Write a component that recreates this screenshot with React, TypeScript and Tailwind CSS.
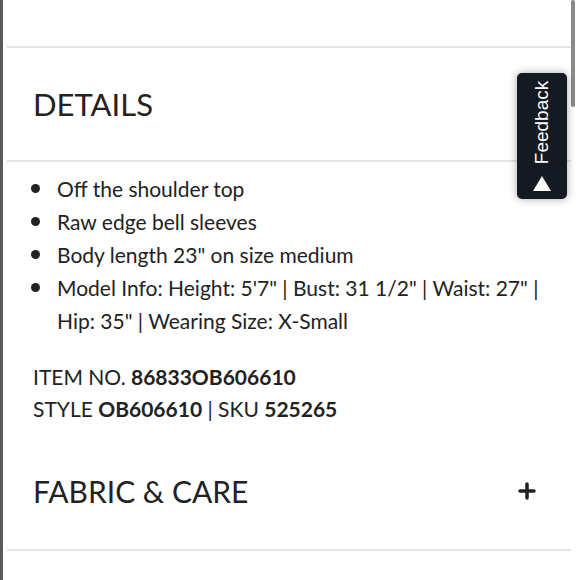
import { Plus, Minus } from 'lucide-react'

const details = [
  'Off the shoulder top',
  'Raw edge bell sleeves',
  'Body length 23" on size medium',
]

function Dot() {
  return (
    <span className="-ml-[3px] flex h-[33px] w-[27px] shrink-0 items-center pl-[1px]">
      <span className="h-[9px] w-[9px] rounded-full bg-[#222]" />
    </span>
  )
}

export default function App() {
  return (
    <div className="relative h-[580px] w-[580px] overflow-hidden bg-white text-[#222] font-['Lato','Liberation_Sans',sans-serif]">
      <div className="flex h-full">
        <div className="w-[3px] bg-[#5a5a5a]" />
        <main className="flex-1 pl-[4px] pt-[46px]">
          {/* details section */}
          <section className="border-t-2 border-[#e4e4e4]">
            <div className="flex h-[112px] items-center justify-between pl-[26px] pr-[32px]">
              <h2 className="text-[31px] leading-none">DETAILS</h2>
              <Minus size={22} strokeWidth={3} />
            </div>
          </section>
          <div className="border-t-2 border-[#e4e4e4] pl-[26px] pt-[10px] text-[21px] leading-[33px]">
            <ul>
              {details.map(d => (
                <li key={d} className="flex">
                  <Dot />
                  {d}
                </li>
              ))}
              <li className="flex">
                <Dot />
                <span className="whitespace-nowrap">
                  Model Info: Height: 5'7" | Bust: 31 1/2" | Waist: 27" |<br />
                  Hip: 35" | Wearing Size: X-Small
                </span>
              </li>
            </ul>
            <div className="mt-[24px] leading-[32px]">
              <p>ITEM NO. <b className="font-bold">86833OB606610</b></p>
              <p>STYLE <b className="font-bold">OB606610</b> | SKU <b className="font-bold">525265</b></p>
            </div>
          </div>
          {/* fabric section */}
          <div className="mt-[16px] flex h-[110px] items-center justify-between border-b-2 border-[#e4e4e4] pb-[8px] pl-[26px] pr-[32px]">
            <h2 className="text-[30px] leading-none">FABRIC &amp; CARE</h2>
            <Plus size={24} strokeWidth={3.5} />
          </div>
        </main>
        <div className="w-[9px]">
          <div className="h-[107px] w-[4px] rounded-full bg-[#8a8a8a]" />
        </div>
      </div>

      {/* feedback tab */}
      <button className="absolute left-[517px] top-[73px] flex h-[126px] w-[50px] flex-col items-center justify-between rounded-[5px] bg-[#131a22] pb-[8px] pt-[7px] text-white shadow-[0_0_8px_rgba(0,0,0,0.35)]">
        <span className="flex h-[84px] items-center justify-center">
          <span className="-rotate-90 whitespace-nowrap font-['Liberation_Sans',Arial,sans-serif] text-[19px] leading-none">Feedback</span>
        </span>
        <svg width="18" height="15" viewBox="0 0 18 15">
          <polygon points="9,0 18,15 0,15" fill="white" />
        </svg>
      </button>
    </div>
  )
}
